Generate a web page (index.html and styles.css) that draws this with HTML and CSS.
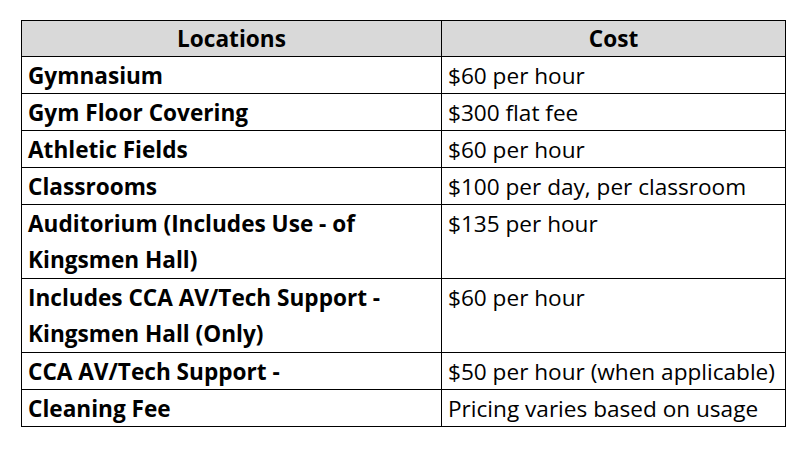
FILE: index.html
```html
<!DOCTYPE html>
<html>
<head>
<meta charset="utf-8">
<link rel="stylesheet" href="styles.css">
</head>
<body>
<table class="rates">
  <colgroup><col class="c-loc"><col class="c-cost"></colgroup>
  <thead>
    <tr><th>Locations</th><th>Cost</th></tr>
  </thead>
  <tbody>
    <tr><td class="loc">Gymnasium</td><td>$60 per hour</td></tr>
    <tr><td class="loc">Gym Floor Covering</td><td>$300 flat fee</td></tr>
    <tr><td class="loc">Athletic Fields</td><td>$60 per hour</td></tr>
    <tr><td class="loc">Classrooms</td><td>$100 per day, per classroom</td></tr>
    <tr class="two"><td class="loc">Auditorium (Includes Use - of<br>Kingsmen Hall)</td><td>$135 per hour</td></tr>
    <tr class="two"><td class="loc">Includes CCA AV/Tech Support -<br>Kingsmen Hall (Only)</td><td>$60 per hour</td></tr>
    <tr><td class="loc">CCA AV/Tech Support -</td><td>$50 per hour (when applicable)</td></tr>
    <tr><td class="loc">Cleaning Fee</td><td>Pricing varies based on usage</td></tr>
  </tbody>
</table>
</body>
</html>
```
FILE: styles.css
```css
html, body {
  margin: 0;
  padding: 0;
  background: #ffffff;
}
body {
  padding: 20px 0 0 21px;
  font-family: "Open Sans", "Liberation Sans", sans-serif;
  color: #000;
}
.rates {
  border-collapse: collapse;
  table-layout: fixed;
  width: 764px;
}
.c-loc { width: 420px; }
.c-cost { width: 344px; }
.rates th, .rates td {
  border: 1px solid #000;
  font-size: 22.6px;
  line-height: 35px;
  vertical-align: top;
  padding: 1px 0 0 6px;
  white-space: nowrap;
}
.rates tr.two td {
  line-height: 36px;
}
.rates th {
  background: #d9d9d9;
  font-weight: 700;
  text-align: center;
  padding: 0;
  height: 35px;
  line-height: 35px;
}
.rates td.loc {
  font-weight: 700;
}
```
